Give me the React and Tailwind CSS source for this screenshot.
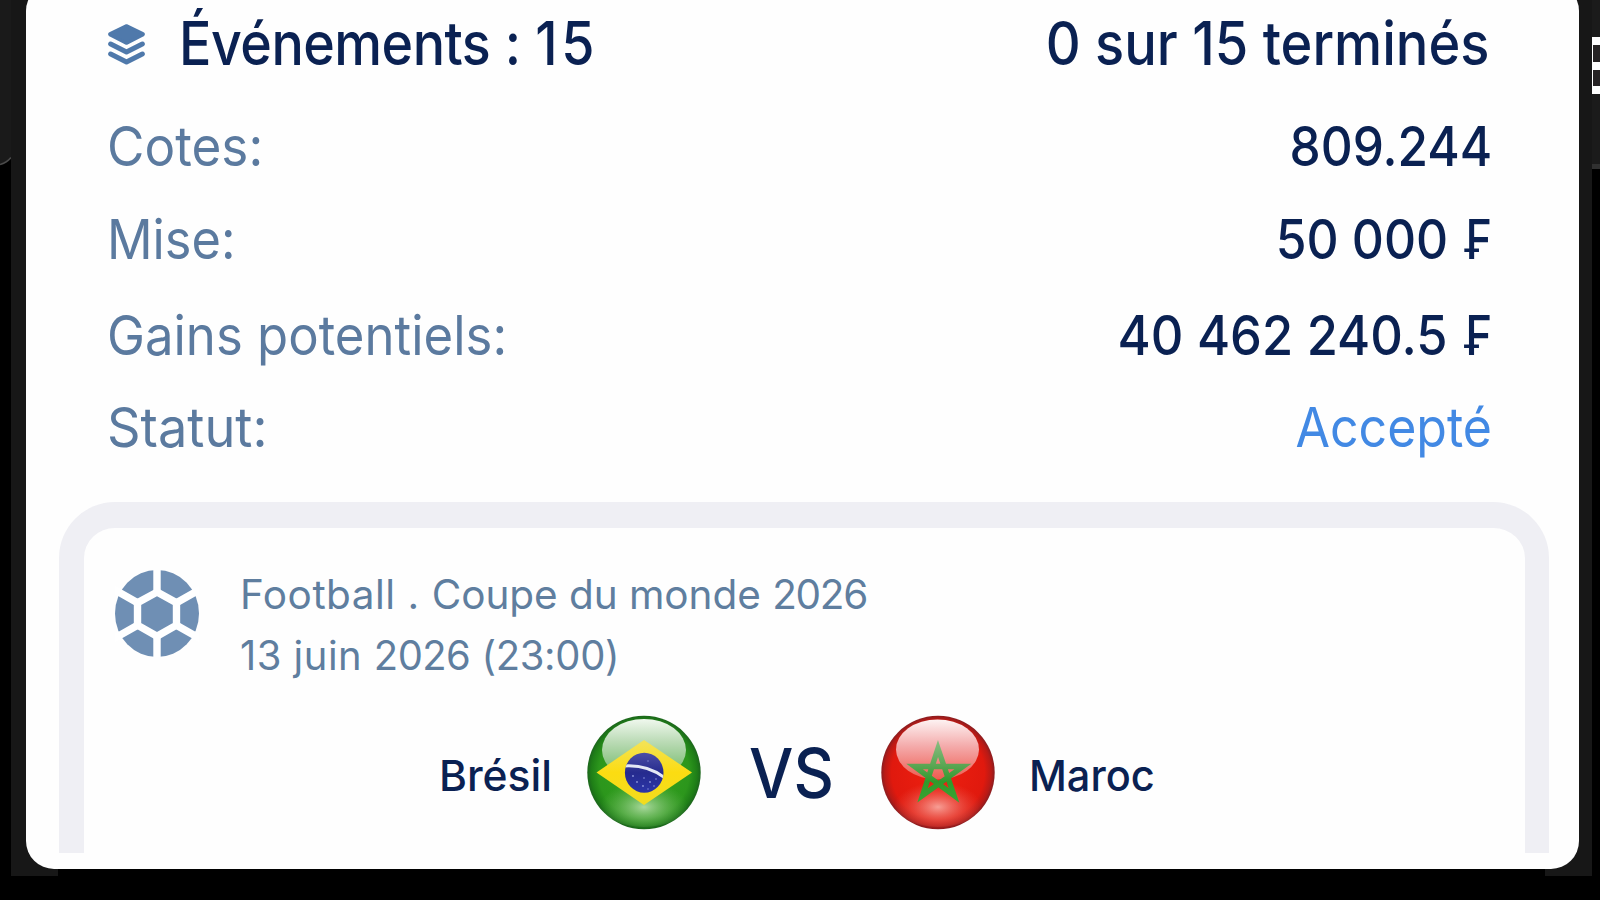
import React from "react";
import clsx from "clsx";

const details = [
  {
    label: "Cotes:",
    value: "809.244",
    row: "mt-[14px] h-[94px]",
    labelScale: "scale-x-[0.932]",
    valueScale: "scale-x-[0.9]",
  },
  {
    label: "Mise:",
    value: "50 000",
    currency: true,
    row: "h-[92px]",
    labelScale: "scale-x-[0.918]",
    valueScale: "scale-x-[0.905]",
  },
  {
    label: "Gains potentiels:",
    value: "40 462 240.5",
    currency: true,
    row: "h-[100px]",
    labelScale: "scale-x-[0.925]",
    valueScale: "scale-x-[0.92]",
  },
  {
    label: "Statut:",
    value: "Accepté",
    row: "h-[84px]",
    labelScale: "scale-x-[0.951]",
    valueScale: "scale-x-[0.91]",
    accent: true,
  },
];

const LayersIcon = () => (
  <svg viewBox="0 0 111 123" className="h-[41px] w-[37px] shrink-0" fill="none" stroke="#4f79ab">
    <path
      d="M55.5 5 L105 29 Q107 31 105 33 L55.5 58 L6 33 Q4 31 6 29 Z"
      fill="#4f79ab"
      strokeWidth="9"
      strokeLinejoin="round"
    />
    <path d="M8 60 L55.5 84 L103 60" strokeWidth="15" strokeLinecap="round" strokeLinejoin="round" />
    <path d="M8 90 L55.5 114 L103 90" strokeWidth="15" strokeLinecap="round" strokeLinejoin="round" />
  </svg>
);

const BallIcon = () => (
  <svg viewBox="0 0 250 260" className="mt-[7px] h-[87px] w-[84px] shrink-0" preserveAspectRatio="none">
    <ellipse cx="125" cy="130" rx="125" ry="130" fill="#6f8fb4" />
    <g stroke="#fff" strokeWidth="22" fill="none">
      <path d="M125 66 L183 98 V165 L125 198 L67 165 V98 Z" />
      <path d="M125 66 V-5 M183 98 L256 56 M183 165 L256 207 M125 198 V265 M67 165 L-6 207 M67 98 L-6 56" />
    </g>
  </svg>
);

const BrazilFlag = () => (
  <svg viewBox="0 0 114 115" className="h-[115px] w-[114px] shrink-0">
    <defs>
      <radialGradient id="brBase" cx="0.5" cy="0.5" r="0.5">
        <stop offset="0" stopColor="#35a51f" />
        <stop offset="0.8" stopColor="#2c961c" />
        <stop offset="0.93" stopColor="#1f7f17" />
        <stop offset="1" stopColor="#1c661c" />
      </radialGradient>
      <radialGradient id="brGlow" cx="0.5" cy="0.6" r="0.5">
        <stop offset="0" stopColor="#b0dca4" stopOpacity="0.95" />
        <stop offset="1" stopColor="#6fb95c" stopOpacity="0" />
      </radialGradient>
      <linearGradient id="brGloss" x1="0" y1="0" x2="0" y2="1">
        <stop offset="0" stopColor="#f0f8ee" />
        <stop offset="0.35" stopColor="#bddcb8" />
        <stop offset="1" stopColor="#66b35b" />
      </linearGradient>
      <linearGradient id="brDiamond" x1="0" y1="0" x2="0" y2="1">
        <stop offset="0" stopColor="#f3e35a" />
        <stop offset="0.5" stopColor="#fbdc12" />
        <stop offset="1" stopColor="#f2dc20" />
      </linearGradient>
      <linearGradient id="brGlobe" x1="0" y1="0" x2="0" y2="1">
        <stop offset="0" stopColor="#4c4fa6" />
        <stop offset="0.5" stopColor="#262b8e" />
        <stop offset="1" stopColor="#2b35a8" />
      </linearGradient>
      <clipPath id="brClip">
        <ellipse cx="57.2" cy="57.7" rx="19.3" ry="20" />
      </clipPath>
    </defs>
    <circle cx="57" cy="57.5" r="56.7" fill="url(#brBase)" />
    <ellipse cx="57" cy="87" rx="44" ry="25" fill="url(#brGlow)" />
    <ellipse cx="57" cy="35" rx="42" ry="31" fill="url(#brGloss)" />
    <path d="M57 25 L105 57.5 L57 90 L9.5 57.5 Z" fill="url(#brDiamond)" />
    <ellipse cx="57.2" cy="57.7" rx="19.3" ry="20" fill="url(#brGlobe)" />
    <g clipPath="url(#brClip)">
      <path d="M36 51 Q60 49 78 63" fill="none" stroke="#e4e8f5" strokeWidth="3" />
      <g fill="#8d97dc">
        <circle cx="46" cy="61" r="0.9" />
        <circle cx="50" cy="67" r="0.9" />
        <circle cx="57" cy="63" r="0.8" />
        <circle cx="56" cy="71" r="0.9" />
        <circle cx="63" cy="67" r="0.9" />
        <circle cx="67" cy="71" r="0.8" />
        <circle cx="69" cy="64" r="0.8" />
        <circle cx="61" cy="74" r="0.7" />
        <circle cx="61" cy="46" r="0.7" />
      </g>
    </g>
  </svg>
);

const MoroccoFlag = () => (
  <svg viewBox="0 0 114 115" className="h-[115px] w-[114px] shrink-0">
    <defs>
      <radialGradient id="maBase" cx="0.5" cy="0.5" r="0.5">
        <stop offset="0" stopColor="#ee2010" />
        <stop offset="0.82" stopColor="#e0190e" />
        <stop offset="0.94" stopColor="#b81a16" />
        <stop offset="1" stopColor="#8a1d20" />
      </radialGradient>
      <radialGradient id="maGlow" cx="0.5" cy="0.6" r="0.5">
        <stop offset="0" stopColor="#f8a59c" stopOpacity="0.95" />
        <stop offset="1" stopColor="#ee5a4e" stopOpacity="0" />
      </radialGradient>
      <linearGradient id="maGloss" x1="0" y1="0" x2="0" y2="1">
        <stop offset="0" stopColor="#fdf3f3" />
        <stop offset="0.45" stopColor="#f4aaaa" />
        <stop offset="1" stopColor="#ee5b50" />
      </linearGradient>
      <linearGradient id="maStar" gradientUnits="userSpaceOnUse" x1="0" y1="24" x2="0" y2="90">
        <stop offset="0" stopColor="#8fbf86" />
        <stop offset="0.4" stopColor="#5aa653" />
        <stop offset="0.65" stopColor="#2f9a2b" />
        <stop offset="1" stopColor="#3aa534" />
      </linearGradient>
    </defs>
    <circle cx="57" cy="57.5" r="56.7" fill="url(#maBase)" />
    <ellipse cx="57" cy="87" rx="44" ry="25" fill="url(#maGlow)" />
    <ellipse cx="56.5" cy="34.5" rx="41.5" ry="30" fill="url(#maGloss)" />
    <path
      d="M57 33.5 L73 80.5 L33.5 51.5 H82 L41.5 80.5 Z"
      fill="none"
      stroke="url(#maStar)"
      strokeWidth="5.4"
      strokeMiterlimit="8"
    />
  </svg>
);

const LeftEdge = () => (
  <div className="w-[11px] shrink-0">
    <div className="h-[154px] bg-[#1a1a1a]" />
    <svg viewBox="0 0 11 13" className="block h-[13px] w-[11px]">
      <path d="M0 0 H11 V3 Q7 8 0 10 Z" fill="#1a1a1a" />
      <path d="M0 10.5 Q7 8.5 11 3.5" fill="none" stroke="#4a4a4a" strokeWidth="1.6" />
    </svg>
  </div>
);

const RightEdge = () => (
  <div className="w-2 shrink-0">
    <div className="h-[37px] bg-[#1b1b1b]" />
    <div className="flex h-[57px] flex-col justify-between border-l border-white bg-[#262324]">
      <div className="h-2 bg-white" />
      <div className="h-2 bg-white" />
      <div className="h-2 bg-white" />
    </div>
    <div className="h-[70px] bg-[#1b1b1b]" />
    <div className="h-[5px] bg-[#303030]" />
  </div>
);

const App = () => {
  return (
    <div className="flex h-[900px] w-[1600px] overflow-hidden bg-black font-['Inter',sans-serif] text-[#0a2152]">
      <LeftEdge />

      <div className="h-[876px] w-[1581px] shrink-0 bg-[#171717] pr-[13px] pl-[15px]">
        <div className="-mt-[17px] h-[886px] rounded-[28px] bg-[#fefefe] pt-[17px]">
          <div className="flex h-[85px] items-center justify-between pr-[90px] pl-[82px]">
            <div className="flex items-center gap-[34px]">
              <div className="pt-1">
                <LayersIcon />
              </div>
              <h1 className="origin-left scale-x-[0.896] text-[60px] leading-none font-medium whitespace-nowrap [font-feature-settings:'calt'_0]">
                <span className="tracking-[-0.55px]">Événements</span> :{" "}
                <span className="tracking-[4px]">1</span>5
              </h1>
            </div>
            <span className="origin-right scale-x-[0.903] text-[60px] leading-none font-medium whitespace-nowrap">
              0 sur 15 terminés
            </span>
          </div>

          {details.map((item) => (
            <div
              key={item.label}
              className={clsx(
                "flex items-center justify-between pr-[87px] pl-[81px] text-[55px] leading-none whitespace-nowrap",
                item.row
              )}
            >
              <span className={clsx("origin-left text-[#5b7a9f]", item.labelScale)}>
                {item.label}
              </span>
              <span
                className={clsx(
                  "origin-right",
                  item.accent ? "text-[#4289e4]" : "font-[470]",
                  item.valueScale
                )}
              >
                {item.value}
                {item.currency && (
                  <span className="inline-block origin-right scale-x-[0.9] whitespace-pre"> ₣</span>
                )}
              </span>
            </div>
          ))}

          <div className="mt-[33px] mr-[30px] ml-[33px] h-[351px] rounded-t-[56px] border-t-[26px] border-r-[24px] border-l-[25px] border-[#efeff4]">
            <div className="flex gap-[41px] pt-[35px] pl-[31px]">
              <BallIcon />
              <div className="pt-px text-[40.5px] leading-[61px] whitespace-nowrap text-[#5f7e9f]">
                <p>
                  <span className="tracking-[0.5px]">Football . </span>
                  <span className="tracking-[-0.05px]">Coupe du monde </span>
                  <span className="tracking-[-1.3px]">2026</span>
                </p>
                <p className="origin-left scale-x-[0.986]">
                  <span className="tracking-[0.5px]">13 juin </span>
                  <span className="tracking-[-0.6px]">2026</span>{" "}
                  <span className="tracking-[-0.3px]">(23:00)</span>
                </p>
              </div>
            </div>

            <div className="mt-[29px] flex items-center pl-[355px] text-[43px] leading-none font-medium">
              <span className="mt-1.5 w-[113px] origin-left scale-x-[0.99]">Brésil</span>
              <div className="ml-[35px]">
                <BrazilFlag />
              </div>
              <span className="mt-0.5 ml-[48px] w-[85px] origin-left scale-x-[0.908] text-[69px] whitespace-nowrap">
                VS
              </span>
              <div className="ml-[47px]">
                <MoroccoFlag />
              </div>
              <span className="mt-1.5 ml-[34px] origin-left scale-x-[0.965]">Maroc</span>
            </div>
          </div>
        </div>
        <div className="mr-[34px] ml-[32px] h-[7px] bg-black" />
      </div>

      <RightEdge />
    </div>
  );
};

export default App;
